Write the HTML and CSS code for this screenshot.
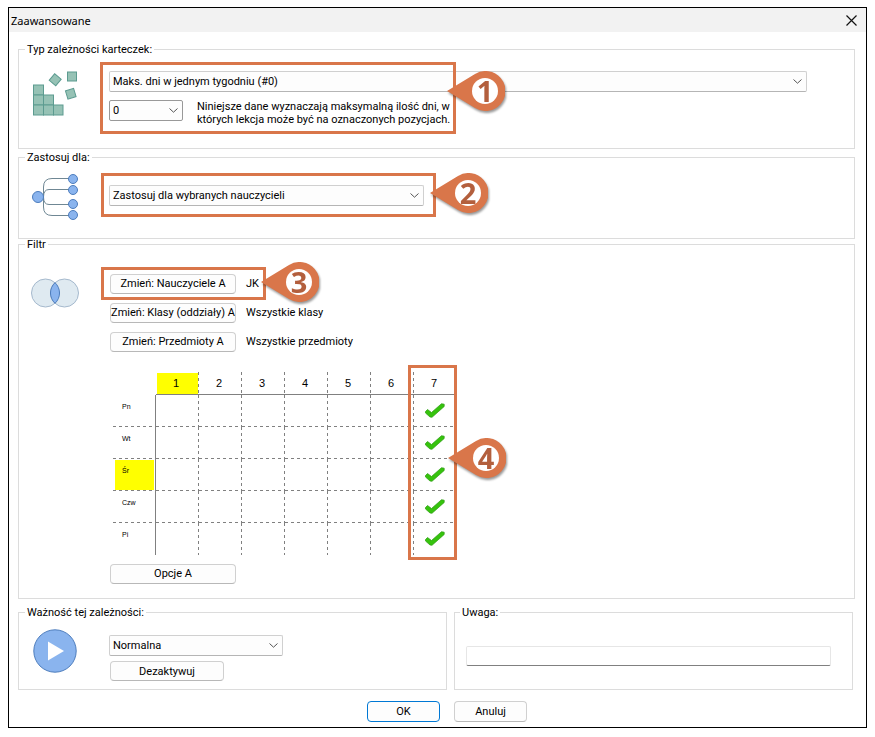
FILE: index.html
```html
<!DOCTYPE html>
<html lang="pl">
<head>
    <meta charset="UTF-8">
    <meta name="viewport" content="width=device-width, initial-scale=1.0">
    <title>Zaawansowane</title>
    <link rel="stylesheet" href="styles.css">
</head>
<body>
    <form class="dialog">
        <header class="titlebar">
            <h1>Zaawansowane</h1>
            <button type="button" class="close-btn" aria-label="Zamknij">
                <svg width="11" height="11" viewBox="0 0 11 11"><path d="M0.5 0.5l10 10M10.5 0.5l-10 10" stroke="#111" stroke-width="1.2" fill="none"/></svg>
            </button>
        </header>

        <div class="dialog-body">
            <fieldset class="group group-type">
                <legend>Typ zależności karteczek:</legend>
                <svg class="group-icon" viewBox="0 0 48 48">
                    <g fill="#96c2b5" stroke="#5c9b90">
                        <rect x="2.5" y="16" width="10" height="10"/>
                        <rect x="2.5" y="26" width="10" height="10"/>
                        <rect x="12.5" y="26" width="10" height="10"/>
                        <rect x="2.5" y="36" width="10" height="10"/>
                        <rect x="12.5" y="36" width="10" height="10"/>
                        <rect x="22.5" y="36" width="9.5" height="10"/>
                        <rect x="36.5" y="3" width="9" height="9"/>
                        <rect x="20" y="6.5" width="8.5" height="8.5" transform="rotate(40 24.2 10.7)"/>
                        <rect x="35.5" y="20.5" width="8.5" height="8.5" transform="rotate(-17 39.7 24.7)"/>
                    </g>
                </svg>
                <div class="group-content">
                    <select class="type-select" aria-label="Typ zależności">
                        <option>Maks. dni w jednym tygodniu (#0)</option>
                    </select>
                    <div class="count-row">
                        <select class="count-select" id="count"><option>0</option></select>
                        <label for="count">Niniejsze dane wyznaczają maksymalną ilość dni, w<br>których lekcja może być na oznaczonych pozycjach.</label>
                    </div>
                    <div class="callout callout-1">
                        <div class="pin">
                            <svg viewBox="0 0 58 40"><path d="M0 20L28 3A20 20 0 1 1 28 37Z"/><circle cx="38" cy="20" r="13"/></svg>
                            <span>1</span>
                        </div>
                    </div>
                </div>
            </fieldset>

            <fieldset class="group group-apply">
                <legend>Zastosuj dla:</legend>
                <svg class="group-icon" viewBox="0 0 48 48">
                    <g fill="none" stroke="#6f8794">
                        <path d="M42 5.5H21q-8.5 0-8.5 8.5V34q0 8.5 8.5 8.5h21"/>
                        <path d="M42 16.5H18q-5.5 0-5.5 7.5t5.5 7.5h24"/>
                    </g>
                    <g fill="#8ab4ee" stroke="#4d7dbd">
                        <circle cx="7" cy="24" r="5.5"/>
                        <circle cx="42" cy="6" r="4.5"/>
                        <circle cx="42" cy="17" r="4.5"/>
                        <circle cx="42" cy="31" r="4.5"/>
                        <circle cx="42" cy="42" r="4.5"/>
                    </g>
                </svg>
                <div class="group-content">
                    <select class="apply-select" aria-label="Zastosuj dla">
                        <option>Zastosuj dla wybranych nauczycieli</option>
                    </select>
                    <div class="callout callout-2">
                        <div class="pin">
                            <svg viewBox="0 0 58 40"><path d="M0 20L28 3A20 20 0 1 1 28 37Z"/><circle cx="38" cy="20" r="13"/></svg>
                            <span>2</span>
                        </div>
                    </div>
                </div>
            </fieldset>

            <fieldset class="group group-filter">
                <legend>Filtr</legend>
                <svg class="group-icon" viewBox="0 0 48 48">
                    <g fill="#dfeaf1" stroke="#a5b9cd">
                        <circle cx="14.5" cy="24" r="14"/>
                        <circle cx="33.5" cy="24" r="14"/>
                    </g>
                    <path d="M24 13.7a14 14 0 0 1 0 20.6a14 14 0 0 1 0-20.6Z" fill="#8ab4ee" stroke="#4d7dbd"/>
                </svg>
                <div class="group-content">
                    <div class="filter-row">
                        <button type="button">Zmień: Nauczyciele A</button>
                        <span>JK</span>
                    </div>
                    <div class="filter-row">
                        <button type="button">Zmień: Klasy (oddziały) A</button>
                        <span>Wszystkie klasy</span>
                    </div>
                    <div class="filter-row">
                        <button type="button">Zmień: Przedmioty A</button>
                        <span>Wszystkie przedmioty</span>
                    </div>

                    <table class="timetable">
                        <thead>
                            <tr><td></td><th class="current">1</th><th>2</th><th>3</th><th>4</th><th>5</th><th>6</th><th>7</th></tr>
                        </thead>
                        <tbody>
                            <tr><th>Pn</th><td></td><td></td><td></td><td></td><td></td><td></td><td><svg class="check" viewBox="0 0 20 15"><use href="#check"/></svg></td></tr>
                            <tr><th>Wt</th><td></td><td></td><td></td><td></td><td></td><td></td><td><svg class="check" viewBox="0 0 20 15"><use href="#check"/></svg></td></tr>
                            <tr><th class="current">Śr</th><td></td><td></td><td></td><td></td><td></td><td></td><td><svg class="check" viewBox="0 0 20 15"><use href="#check"/></svg></td></tr>
                            <tr><th>Czw</th><td></td><td></td><td></td><td></td><td></td><td></td><td><svg class="check" viewBox="0 0 20 15"><use href="#check"/></svg></td></tr>
                            <tr><th>Pi</th><td></td><td></td><td></td><td></td><td></td><td></td><td><svg class="check" viewBox="0 0 20 15"><use href="#check"/></svg></td></tr>
                        </tbody>
                    </table>

                    <div class="filter-row">
                        <button type="button">Opcje A</button>
                    </div>

                    <div class="callout callout-3">
                        <div class="pin">
                            <svg viewBox="0 0 58 40"><path d="M0 20L28 3A20 20 0 1 1 28 37Z"/><circle cx="38" cy="20" r="13"/></svg>
                            <span>3</span>
                        </div>
                    </div>
                    <div class="callout callout-4">
                        <div class="pin">
                            <svg viewBox="0 0 58 40"><path d="M0 20L28 3A20 20 0 1 1 28 37Z"/><circle cx="38" cy="20" r="13"/></svg>
                            <span>4</span>
                        </div>
                    </div>
                </div>
            </fieldset>

            <div class="columns">
                <fieldset class="group group-weight">
                    <legend>Ważność tej zależności:</legend>
                    <svg class="group-icon" viewBox="0 0 48 48">
                        <circle cx="24" cy="24" r="21.2" fill="#8ab4ee" stroke="#4d7dbd"/>
                        <path d="M17 14.5v19l16-9.5z" fill="#fff"/>
                    </svg>
                    <div class="group-content">
                        <select class="weight-select" aria-label="Ważność">
                            <option>Normalna</option>
                        </select>
                        <button type="button" class="deactivate-btn">Dezaktywuj</button>
                    </div>
                </fieldset>
                <fieldset class="group group-note">
                    <legend>Uwaga:</legend>
                    <input type="text" class="note-input" aria-label="Uwaga">
                </fieldset>
            </div>

            <div class="columns footer">
                <button type="submit" class="ok-btn">OK</button>
                <button type="button" class="cancel-btn">Anuluj</button>
            </div>
        </div>
    </form>

    <svg width="0" height="0" class="defs">
        <symbol id="check" viewBox="0 0 20 15">
            <path d="M0.5 8.5L2.5 6.5L6.5 9.5L16.5 0.7L19.2 1.2V3.5L7 14.3L5 14L0.5 10Z" fill="#36c30d" stroke="#2a9a10" stroke-width="0.7"/>
        </symbol>
    </svg>
</body>
</html>
```
FILE: styles.css
```css
:root {
    --accent: #d9764a;
    --accent-dark: #b35f3d;
    --group-border: #dcdcdc;
    --control-border: #d0d0d0;
    --control-bg: #fdfdfd;
    --grid-line: #808080;
    --dash-down: repeating-linear-gradient(var(--grid-line) 0 3px, #fff 3px 6px) right / 1px 100% no-repeat;
    --dash-across: repeating-linear-gradient(90deg, var(--grid-line) 0 3px, #fff 3px 6px) bottom / 100% 1px no-repeat;
}

* {
    box-sizing: border-box;
}

body {
    margin: 7px 8px;
    background: #fff;
    color: #000;
    font-family: Roboto, Tahoma, sans-serif;
    font-size: 11px;
    line-height: 13px;
}

.defs {
    position: absolute;
}

.dialog {
    border: 1px solid #000;
}

.titlebar {
    display: flex;
    align-items: center;
    justify-content: space-between;
    height: 24px;
    padding: 0 9px 0 2px;
    background: #f2f2f2;
}

.titlebar h1 {
    margin: 0;
    font: 11px "Noto Sans", sans-serif;
}

.close-btn {
    display: flex;
    width: 11px;
    height: 11px;
    padding: 0;
    border: none;
    background: none;
}

.dialog-body {
    padding: 17px 11px 5px 9px;
}

/* groups */
.group {
    display: flex;
    align-items: flex-start;
    gap: 30px;
    min-width: 0;
    margin: 0;
    padding: 0 12px;
    border: 1px solid var(--group-border);
}

.group legend {
    margin-left: -6px;
    padding: 0 2px;
    line-height: 1px;
}

.group-icon {
    flex: none;
    width: 48px;
    height: 48px;
}

.group-content {
    position: relative;
    flex: 1;
}

.group-type {
    padding: 19px 47px 22px 12px;
}

.group-apply {
    margin-top: 8px;
    padding-top: 15px;
    padding-bottom: 17px;
}

.group-filter {
    margin-top: 5px;
    padding-top: 24px;
    padding-bottom: 10px;
}

.group-weight {
    padding-top: 14px;
    padding-bottom: 8px;
}

.group-note {
    padding: 33px 21px 22px 11px;
}

.columns {
    display: grid;
    grid-template-columns: 429fr 399fr;
    gap: 7px;
    margin: 13px 2px 0 0;
}

/* controls */
select,
button,
input {
    font: inherit;
    color: inherit;
}

select {
    appearance: none;
    display: block;
    height: 21px;
    padding: 0 20px 0 3px;
    border: 1px solid var(--control-border);
    border-bottom-color: #b5b5b5;
    border-radius: 2px;
    background: var(--control-bg) url("data:image/svg+xml,%3Csvg xmlns='http://www.w3.org/2000/svg' width='9' height='5'%3E%3Cpath d='M.5 .5l4 3.7 4-3.7' fill='none' stroke='%23555'/%3E%3C/svg%3E") no-repeat right 4px center;
}

.dialog-body button {
    height: 20px;
    padding: 0;
    border: 1px solid var(--control-border);
    border-bottom-color: #b8b8b8;
    border-radius: 4px;
    background: var(--control-bg);
    white-space: nowrap;
}

.type-select {
    width: 100%;
}

.group-type .group-content {
    padding-top: 2px;
}

.count-row {
    display: flex;
    gap: 14px;
    margin-top: 8px;
}

.count-select {
    width: 74px;
    border-color: #999;
}

.apply-select {
    width: 315px;
    margin-top: 12px;
}

.filter-row {
    display: flex;
    align-items: center;
    gap: 10px;
    height: 29px;
    padding-left: 1px;
}

.filter-row button {
    width: 126px;
}

.weight-select {
    width: 174px;
    margin-top: 8px;
}

.deactivate-btn {
    width: 114px;
    margin: 5px 0 0 1px;
}

.note-input {
    width: 100%;
    height: 20px;
    border: 1px solid #e6e6e6;
    border-bottom-color: #808080;
    border-radius: 2px;
}

.footer {
    margin-top: 11px;
}

.footer button {
    width: 73px;
    height: 21px;
}

.footer .ok-btn {
    justify-self: end;
    margin-right: 7px;
    border-color: #0078d4;
}

/* timetable */
.timetable {
    margin: 16px 0 4px 4px;
    border-spacing: 0;
    table-layout: fixed;
    width: 343px;
    font-family: "Liberation Sans", Arial, sans-serif;
}

.timetable th,
.timetable td {
    width: 43px;
    height: 32px;
    padding: 0 3px 0 0;
    font-weight: normal;
    text-align: center;
}

.timetable td {
    background: var(--dash-down), var(--dash-across);
}

.timetable td:last-child {
    padding: 0 1px 2px 0;
    background: var(--dash-across);
}

.timetable tr:last-child td {
    background: var(--dash-down);
}

.timetable tr:last-child td:last-child,
.timetable thead td:first-child {
    background: none;
}

.timetable thead th,
.timetable thead td {
    height: 23px;
}

.timetable thead th {
    border-bottom: 1px solid var(--grid-line);
    background: var(--dash-down);
}

.timetable thead th:last-child {
    background: none;
}

.timetable tbody th {
    padding: 7px 0 0 9px;
    border-right: 1px solid var(--grid-line);
    background: var(--dash-across);
    font-size: 7px;
    line-height: 9px;
    text-align: left;
    vertical-align: top;
}

.timetable tbody tr:last-child th {
    background: none;
}

.timetable thead .current {
    background: var(--dash-down), linear-gradient(#ff0, #ff0) 1px 1px no-repeat;
}

.timetable tbody .current {
    background: var(--dash-across), linear-gradient(#ff0, #ff0) 2px 1px / 39px 100% no-repeat;
}

.check {
    display: block;
    width: 20px;
    height: 15px;
    margin: 0 auto;
}

/* numbered callouts */
.callout {
    position: absolute;
    border: 3px solid var(--accent);
    pointer-events: none;
}

.callout-1 {
    top: -7px;
    left: -9px;
    width: 356px;
    height: 72px;
}

.callout-2 {
    top: 0;
    left: -8px;
    width: 335px;
    height: 44px;
}

.callout-3 {
    top: -2px;
    left: -8px;
    width: 165px;
    height: 33px;
}

.callout-4 {
    top: 96px;
    left: 299px;
    width: 49px;
    height: 195px;
}

.pin {
    position: absolute;
    right: -52px;
    display: grid;
    width: 58px;
    height: 40px;
    filter: drop-shadow(1px 2px 1px rgba(0, 0, 0, 0.4));
}

.callout-1 .pin {
    top: 6px;
}

.callout-2 .pin {
    top: -3px;
    right: -55px;
}

.callout-3 .pin {
    top: -8px;
    right: -56px;
}

.callout-4 .pin {
    top: 70px;
}

.pin svg,
.pin span {
    grid-area: 1 / 1;
}

.pin path {
    fill: var(--accent);
}

.pin circle {
    fill: #fff;
}

.pin span {
    padding-left: 18px;
    color: var(--accent-dark);
    font: bold 29px/40px "Open Sans", sans-serif;
    text-align: center;
}
```
